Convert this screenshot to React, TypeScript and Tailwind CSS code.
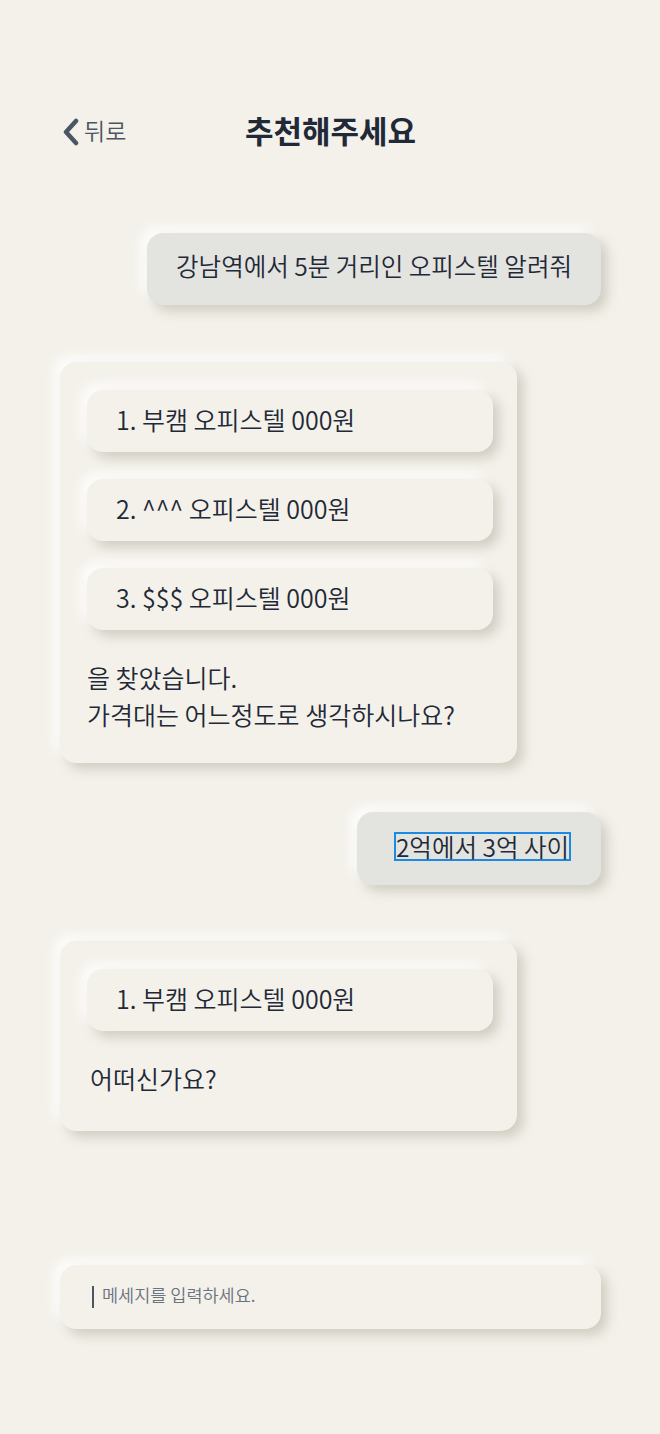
import React from "react";

const FONT = "font-['Noto_Sans_CJK_KR','Noto_Sans',sans-serif]";
const RAISED =
  "shadow-[6px_6px_12px_rgba(120,110,90,0.28),-6px_-6px_12px_rgba(255,255,255,0.9)]";

const UserBubble: React.FC<{ children: React.ReactNode; className?: string }> = ({
  children,
  className = "",
}) => (
  <div className="flex justify-end">
    <div
      className={`rounded-2xl bg-[#e3e3df] text-[24.5px] font-[350] text-[#1f2937] ${RAISED} ${className}`}
    >
      {children}
    </div>
  </div>
);

const Option: React.FC<{ label: string }> = ({ label }) => (
  <div
    className={`flex h-[62px] items-center rounded-2xl bg-[#f3f1ea] pb-[3px] pl-[29px] text-[25px] font-[350] text-[#1f2937] ${RAISED}`}
  >
    {label}
  </div>
);

const BotCard: React.FC<{ options: string[]; lines: string[]; textPad?: string }> = ({
  options,
  lines,
  textPad = "pl-0",
}) => (
  <div className="flex">
    <div
      className={`w-[457px] rounded-2xl bg-[#f3f1ea] pb-[30px] pl-[27px] pr-[24px] pt-[28px] ${RAISED}`}
    >
      <div className="flex flex-col gap-[27px]">
        {options.map((o) => (
          <Option key={o} label={o} />
        ))}
      </div>
      <div
        className={`mt-[29px] text-[25px] font-[350] leading-[37px] text-[#1f2937] ${textPad}`}
      >
        {lines.map((l) => (
          <div key={l}>{l}</div>
        ))}
      </div>
    </div>
  </div>
);

export default function App() {
  return (
    <div className={`min-h-[1434px] w-full bg-[#f3f1ea] pl-[60px] pr-[59px] pt-[107px] ${FONT}`}>
      {/* Header */}
      <div className="grid h-[40px] grid-cols-[1fr_auto_1fr] items-center">
        <button className="flex items-center gap-[5px] text-[23px] font-[350] text-[#4b5563]">
          <svg width="18" height="28" viewBox="0 0 18 28" className="ml-[1px] mt-[3px]">
            <path
              d="M15 3 L5 14 L15 25"
              fill="none"
              stroke="#4b5563"
              strokeWidth="4.5"
              strokeLinecap="round"
              strokeLinejoin="round"
            />
          </svg>
          <span>뒤로</span>
        </button>
        <h1 className="text-[31px] font-bold text-[#1f2937]">추천해주세요</h1>
        <div />
      </div>

      {/* Messages */}
      <div className="mt-[86px] flex flex-col">
        <UserBubble className="px-[29px] pb-[23px] pt-[17px] leading-[32px]">
          강남역에서 5분 거리인 오피스텔 알려줘
        </UserBubble>

        <div className="mt-[57px]">
          <BotCard
            options={["1. 부캠 오피스텔 000원", "2. ^^^ 오피스텔 000원", "3. $$$ 오피스텔 000원"]}
            lines={["을 찾았습니다.", "가격대는 어느정도로 생각하시나요?"]}
          />
        </div>

        <div className="mt-[49px]">
          <UserBubble className="pb-[24px] pl-[37px] pr-[30px] pt-[20px]">
            <span className="block border-2 border-[#1a8ae5] leading-[25px]">2억에서 3억 사이</span>
          </UserBubble>
        </div>

        <div className="mt-[56px]">
          <BotCard
            options={["1. 부캠 오피스텔 000원"]}
            lines={["어떠신가요?"]}
            textPad="pl-[3px] pb-[4px]"
          />
        </div>

        {/* Input */}
        <div
          className={`mt-[134px] flex h-[64px] items-center rounded-2xl bg-[#f3f1ea] pl-[32px] ${RAISED}`}
        >
          <span className="mr-[8px] h-[22px] w-[2px] bg-[#4b5563]" />
          <span className="pb-[3px] text-[17.5px] font-[350] text-[#6b7280]">
            메세지를 입력하세요.
          </span>
        </div>
      </div>
    </div>
  );
}
